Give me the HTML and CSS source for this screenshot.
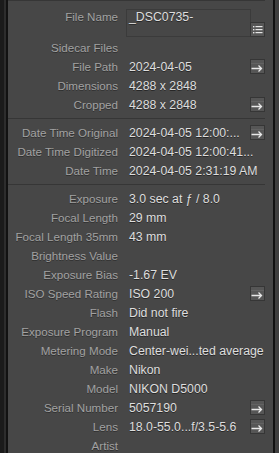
FILE: index.html
```html
<!DOCTYPE html>
<html lang="en">
<head>
<meta charset="UTF-8">
<meta name="viewport" content="width=device-width, initial-scale=1">
<title>Metadata</title>
<link rel="stylesheet" href="styles.css">
</head>
<body>
<div class="frame">
<div class="edge-l"></div>
<div class="panel">

<section class="group">
<div class="row name-row">
<span class="label">File Name</span>
<div class="namebox">_DSC0735-</div>
<span class="btn"><svg width="13" height="13" viewBox="0 0 13 13"><g fill="#e6e6e6"><rect x="2" y="3" width="1.4" height="1.4"/><rect x="2" y="6" width="1.4" height="1.4"/><rect x="2" y="9" width="1.4" height="1.4"/><rect x="4.5" y="3" width="7" height="1.2"/><rect x="4.5" y="6" width="7" height="1.2"/><rect x="4.5" y="9" width="7" height="1.2"/></g></svg></span>
</div>
<div class="row"><span class="label">Sidecar Files</span><span class="value"></span></div>
<div class="row"><span class="label">File Path</span><span class="value">2024-04-05</span><span class="btn arrow"></span></div>
<div class="row"><span class="label">Dimensions</span><span class="value">4288 x 2848</span></div>
<div class="row"><span class="label">Cropped</span><span class="value">4288 x 2848</span><span class="btn arrow"></span></div>
</section>

<section class="group">
<div class="row"><span class="label">Date Time Original</span><span class="value">2024-04-05 12:00:...</span><span class="btn arrow"></span></div>
<div class="row"><span class="label">Date Time Digitized</span><span class="value">2024-04-05 12:00:41...</span></div>
<div class="row"><span class="label">Date Time</span><span class="value">2024-04-05 2:31:19 AM</span></div>
</section>

<section class="group">
<div class="row"><span class="label">Exposure</span><span class="value">3.0 sec at ƒ / 8.0</span></div>
<div class="row"><span class="label">Focal Length</span><span class="value">29 mm</span></div>
<div class="row"><span class="label">Focal Length 35mm</span><span class="value">43 mm</span></div>
<div class="row"><span class="label">Brightness Value</span><span class="value"></span></div>
<div class="row"><span class="label">Exposure Bias</span><span class="value">-1.67 EV</span></div>
<div class="row"><span class="label">ISO Speed Rating</span><span class="value">ISO 200</span><span class="btn arrow"></span></div>
<div class="row"><span class="label">Flash</span><span class="value">Did not fire</span></div>
<div class="row"><span class="label">Exposure Program</span><span class="value">Manual</span></div>
<div class="row"><span class="label">Metering Mode</span><span class="value">Center-wei...ted average</span></div>
<div class="row"><span class="label">Make</span><span class="value">Nikon</span></div>
<div class="row"><span class="label">Model</span><span class="value">NIKON D5000</span></div>
<div class="row"><span class="label">Serial Number</span><span class="value">5057190</span><span class="btn arrow"></span></div>
<div class="row"><span class="label">Lens</span><span class="value">18.0-55.0...f/3.5-5.6</span><span class="btn arrow"></span></div>
<div class="row"><span class="label">Artist</span><span class="value"></span></div>
</section>

</div>
<div class="edge-r"></div>
</div>
</body>
</html>
```

FILE: styles.css
```css
body{margin:0;background:#1b1b1b;font-family:'Liberation Sans',Arial,sans-serif;overflow:hidden;}
.frame{display:flex;height:453px;}
.edge-l{width:6px;flex:none;background:linear-gradient(to right,#1b1b1b 0 4px,#2d2d2d 4px 6px);}
.edge-r{width:4px;flex:none;background:#3f3f3f;}
.panel{flex:1;background:#474747;border-left:2px solid #121212;border-right:2px solid #121212;padding-right:8px;overflow:hidden;}
.group{border-top:1px solid #363636;padding:4px 0;}
.group:first-child{padding-top:8px;}
.row{display:flex;align-items:center;height:19px;}
.label{width:110px;flex:none;text-align:right;font-size:11.6px;color:#a2a2a2;text-shadow:0 1px 0 rgba(0,0,0,.35);white-space:nowrap;}
.value{flex:1;margin-left:11px;font-size:12.3px;color:#dedede;text-shadow:0 1px 0 rgba(0,0,0,.45);white-space:nowrap;}
.name-row{height:28px;align-items:flex-start;margin-bottom:1px;}
.name-row .label{line-height:14px;margin-top:1px;}
.namebox{margin-left:8px;width:125px;height:28px;box-sizing:border-box;border:1px solid #3b3b3b;padding:0 2px;line-height:14px;font-size:12.3px;color:#dedede;text-shadow:0 1px 0 rgba(0,0,0,.45);}
.btn{flex:none;width:15px;height:15px;box-sizing:border-box;border:1px solid #363636;background:#565656;display:flex;align-items:center;justify-content:center;}
.name-row .btn{align-self:flex-end;margin-left:-1px;}
.arrow::after{content:"";width:13px;height:13px;background:url("data:image/svg+xml,%3Csvg xmlns='http://www.w3.org/2000/svg' width='13' height='13'%3E%3Cpath d='M0.5 8.5h10M7.5 5.5l3 3-3 3' stroke='%23e8e8e8' stroke-width='1.3' fill='none'/%3E%3Cpath d='M0 3.5h13' stroke='%23626262' stroke-width='1'/%3E%3C/svg%3E") no-repeat center;}
```
